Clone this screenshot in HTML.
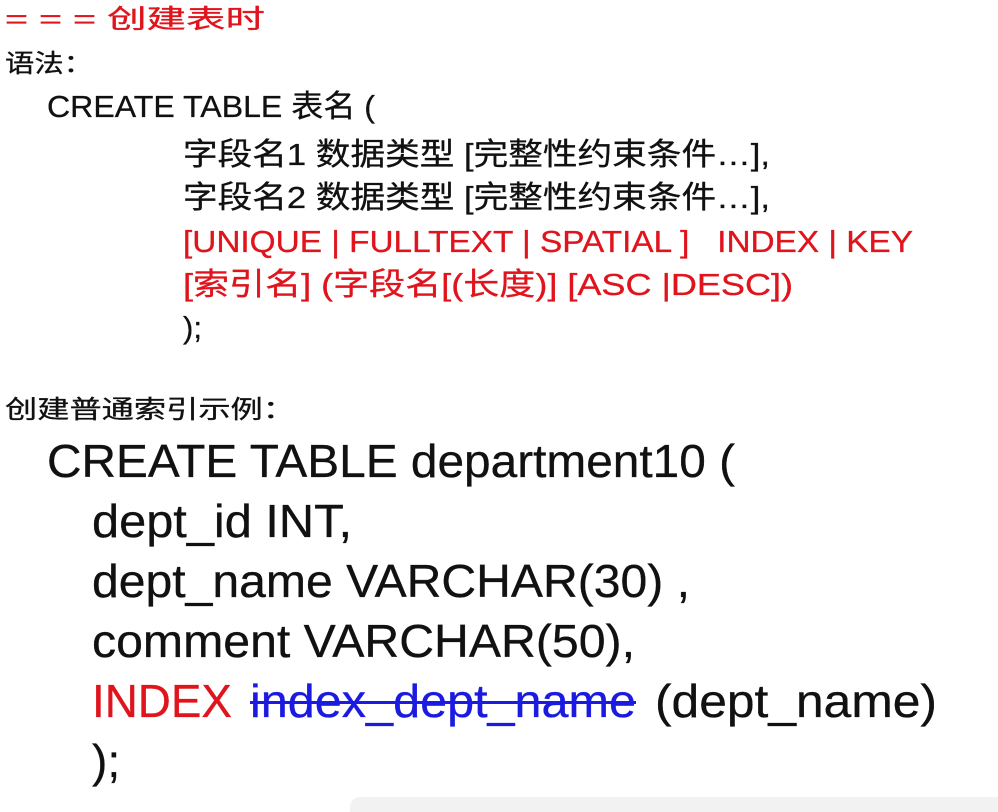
<!DOCTYPE html>
<html><head><meta charset="utf-8"><style>
html,body{margin:0;padding:0;background:#fff;width:998px;height:812px;overflow:hidden}
svg{display:block}
text{font-family:"Liberation Sans","Noto Sans CJK SC",sans-serif;fill:#111;stroke:#111;stroke-width:0.3}
.r{fill:#e0141c;stroke:#e0141c}
.b{fill:#1a1ae0;stroke:#1a1ae0}
</style></head><body>
<svg width="998" height="812" xmlns="http://www.w3.org/2000/svg">
<text x="5" y="28" font-size="26" class="r" textLength="260" lengthAdjust="spacingAndGlyphs">= = = 创建表时</text>
<text x="5" y="72" font-size="25" textLength="88" lengthAdjust="spacingAndGlyphs">语法：</text>
<text x="47" y="117" font-size="31" textLength="328" lengthAdjust="spacingAndGlyphs">CREATE TABLE 表名 (</text>
<text x="183" y="165" font-size="31" textLength="587" lengthAdjust="spacingAndGlyphs">字段名1  数据类型 [完整性约束条件…],</text>
<text x="183" y="208" font-size="31" textLength="587" lengthAdjust="spacingAndGlyphs">字段名2  数据类型 [完整性约束条件…],</text>
<text x="183" y="252" font-size="31" class="r" textLength="730" lengthAdjust="spacingAndGlyphs" xml:space="preserve">[UNIQUE | FULLTEXT | SPATIAL ]   INDEX | KEY</text>
<text x="183" y="295" font-size="31" class="r" textLength="610" lengthAdjust="spacingAndGlyphs">[索引名] (字段名[(长度)] [ASC |DESC])</text>
<text x="183" y="338" font-size="31">);</text>
<text x="5" y="418" font-size="25" textLength="290" lengthAdjust="spacingAndGlyphs">创建普通索引示例：</text>
<text x="47" y="477" font-size="46" textLength="688" lengthAdjust="spacingAndGlyphs">CREATE TABLE department10 (</text>
<text x="92" y="537" font-size="46" textLength="260" lengthAdjust="spacingAndGlyphs">dept_id INT,</text>
<text x="92" y="597" font-size="46" textLength="598" lengthAdjust="spacingAndGlyphs">dept_name VARCHAR(30) ,</text>
<text x="92" y="657" font-size="46" textLength="543" lengthAdjust="spacingAndGlyphs">comment VARCHAR(50),</text>
<text x="92" y="717" font-size="46" class="r" textLength="140" lengthAdjust="spacingAndGlyphs">INDEX</text>
<text x="250" y="717" font-size="46" class="b" textLength="386" lengthAdjust="spacingAndGlyphs">index_dept_name</text>
<rect x="250" y="701" width="386" height="3" fill="#1a1ae0"/>
<text x="655" y="717" font-size="46" textLength="282" lengthAdjust="spacingAndGlyphs">(dept_name)</text>
<text x="92" y="777" font-size="46">);</text>
<rect x="350" y="797" width="660" height="30" rx="10" fill="#f2f2f2"/>
</svg>
</body></html>
